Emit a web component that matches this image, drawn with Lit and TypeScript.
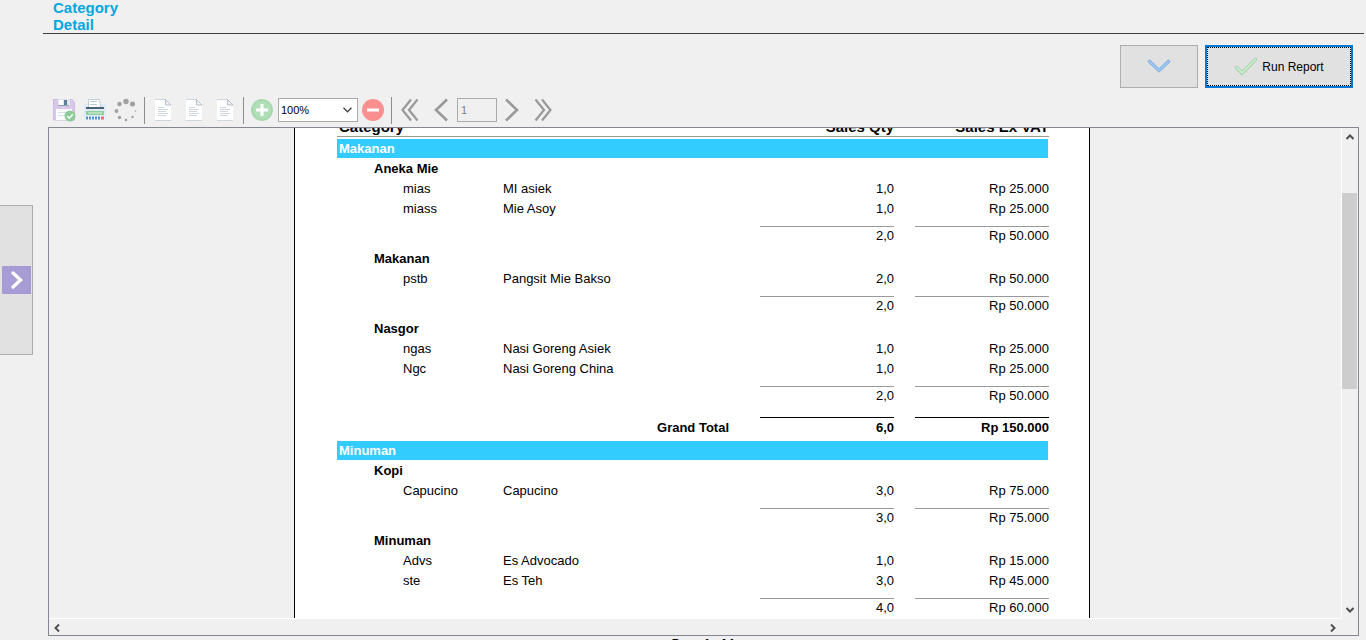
import { LitElement, html, css, svg } from "lit";
import { customElement, property } from "lit/decorators.js";

interface Item { code: string; name: string; qty: string; amount: string; }
interface Group { title: string; items: Item[]; qty: string; amount: string; }
interface Category { title: string; groups: Group[]; total?: { qty: string; amount: string }; }

const REPORT: Category[] = [
  {
    title: "Makanan",
    groups: [
      {
        title: "Aneka Mie",
        items: [
          { code: "mias", name: "MI asiek", qty: "1,0", amount: "Rp 25.000" },
          { code: "miass", name: "Mie Asoy", qty: "1,0", amount: "Rp 25.000" },
        ],
        qty: "2,0",
        amount: "Rp 50.000",
      },
      {
        title: "Makanan",
        items: [{ code: "pstb", name: "Pangsit Mie Bakso", qty: "2,0", amount: "Rp 50.000" }],
        qty: "2,0",
        amount: "Rp 50.000",
      },
      {
        title: "Nasgor",
        items: [
          { code: "ngas", name: "Nasi Goreng Asiek", qty: "1,0", amount: "Rp 25.000" },
          { code: "Ngc", name: "Nasi Goreng China", qty: "1,0", amount: "Rp 25.000" },
        ],
        qty: "2,0",
        amount: "Rp 50.000",
      },
    ],
    total: { qty: "6,0", amount: "Rp 150.000" },
  },
  {
    title: "Minuman",
    groups: [
      {
        title: "Kopi",
        items: [{ code: "Capucino", name: "Capucino", qty: "3,0", amount: "Rp 75.000" }],
        qty: "3,0",
        amount: "Rp 75.000",
      },
      {
        title: "Minuman",
        items: [
          { code: "Advs", name: "Es Advocado", qty: "1,0", amount: "Rp 15.000" },
          { code: "ste", name: "Es Teh", qty: "3,0", amount: "Rp 45.000" },
        ],
        qty: "4,0",
        amount: "Rp 60.000",
      },
    ],
  },
];

const ICONS: Record<string, unknown> = {
  save: svg`
    <path d="M1 1h19l3 3v18H1z" fill="#d9c8ea"/>
    <path d="M1.500 1.500h18l3 3V22h-21z" fill="none" stroke="#cdb9e2"/>
    <path d="M6 1h12v7H6z" fill="#dfe6ee"/>
    <path d="M7 2h4v5H7z" fill="#fff"/><path d="M12 2h3v5h-3z" fill="#5f7d96"/>
    <path d="M6 7.500h11" stroke="#8fa3b5"/>
    <path d="M4 11h16v11H4z" fill="#fafcff"/>
    <path d="M6 14.500h11M6 17.500h7" stroke="#d8e2ea"/>
    <circle cx="18" cy="18" r="5.500" fill="#8fcb98"/>
    <path d="M15.200 18.200l2 2 3.600-4" fill="none" stroke="#fff" stroke-width="1.600"/>`,
  print: svg`
    <path d="M1 6h22v16H1z" fill="#dcebf5"/>
    <path d="M3 9h18v2H3z" fill="#4d6276"/>
    <path d="M6 1h11v8H5z" fill="#fff"/>
    <path d="M5.500 9V1.500h11L17.500 9" fill="none" stroke="#c3cdd8"/>
    <path d="M7 3.500h7M7 6.500h7" stroke="#c0c8d0"/>
    <path d="M3 13h18v4H3z" fill="#8fcf9b"/><path d="M5 14h14v2H5z" fill="#b4e0bb"/>
    <path d="M2 18h20v4H2z" fill="#eef5fc"/>
    <path d="M3 20h15" stroke="#4f93da" stroke-width="3" stroke-dasharray="2 1"/>
    <path d="M18 20h3" stroke="#f26b63" stroke-width="3"/>`,
  spinner: svg`<g fill="#a0a0a0">
    <circle cx="12" cy="3.500" r="2.700"/><circle cx="18.500" cy="6" r="2.500"/>
    <circle cx="5.500" cy="6" r="2.200"/><circle cx="2.500" cy="13" r="1.900"/>
    <circle cx="5.500" cy="19.500" r="1.700"/><circle cx="12" cy="22" r="1.300"/>
    <circle cx="18.500" cy="19" r="1.200"/><circle cx="21.500" cy="13" r="0.800"/></g>`,
  page: svg`
    <path d="M4 1h11l5 5v17H4z" fill="#fff"/>
    <path d="M4 1.500h11M4 22.500h16" stroke="#ccd6df"/>
    <path d="M14.500 1v6H20L14.500 1.500" fill="#eef2f6" stroke="#b5c0cb"/>
    <path d="M7 9.500h6M7 11.500h10M7 13.500h8M7 15.500h10M7 17.500h8" stroke="#cfd6de"/>`,
  plus: svg`<circle cx="12" cy="12" r="11" fill="#b0deb6"/><circle cx="12" cy="12" r="10" fill="none" stroke="#a1d4a8"/>
    <path d="M12 6v12M6 12h12" stroke="#fff" stroke-width="3"/>`,
  minus: svg`<circle cx="12" cy="12" r="11" fill="#f98f8f"/><path d="M6 12h12" stroke="#fff" stroke-width="3"/>`,
  first: svg`<path d="M13 1.500L4.500 12 13 22.500M19.500 1.500L11 12l8.500 10.500" fill="none" stroke="#999" stroke-width="2.200"/>`,
  prev: svg`<path d="M18 1.500L7 12l11 10.500" fill="none" stroke="#999" stroke-width="2.600"/>`,
  next: svg`<path d="M6 1.500L17 12 6 22.500" fill="none" stroke="#999" stroke-width="2.600"/>`,
  last: svg`<path d="M4.500 1.500L13 12 4.500 22.500M11 1.500L19.500 12 11 22.500" fill="none" stroke="#999" stroke-width="2.200"/>`,
  down: svg`<path d="M1.500 5.500L12 15.500 22.500 5.500" fill="none" stroke="#7fa9dc" stroke-width="3.200"/>
    <path d="M2 6L12 15.500 22 6" fill="none" stroke="#9cc8f7" stroke-width="1.800"/>`,
  check: svg`<path d="M2.500 12.500l5.500 5.500L21.500 4.500" fill="none" stroke="#9ccba5" stroke-width="3.400" stroke-linecap="round"/>
    <path d="M2.500 12.500l5.500 5.500L21.500 4.500" fill="none" stroke="#c9efcd" stroke-width="1.900" stroke-linecap="round"/>`,
};

@customElement("glyph-icon")
export class GlyphIcon extends LitElement {
  @property() name = "";
  static styles = css`
    :host { display: block; width: 24px; height: 24px; flex: none; }
    .glyph { display: block; width: 24px; height: 24px; }
  `;
  render() {
    return html`<svg class="glyph" viewBox="0 0 24 24" aria-hidden="true">${ICONS[this.name]}</svg>`;
  }
}

@customElement("report-sheet")
export class ReportSheet extends LitElement {
  static styles = css`
    :host { display: block; }
    .table {
      width: 712px; table-layout: fixed; border-collapse: separate; border-spacing: 0;
      font: 13px/20px "Liberation Sans", Arial, sans-serif; color: #000;
    }
    .c-indent { width: 37px; }
    .c-group { width: 29px; }
    .c-code { width: 100px; }
    .c-qty, .c-amount { width: 134px; }
    .c-gap { width: 21px; }
    td, th { padding: 0; white-space: nowrap; text-align: left; vertical-align: top; }
    .num { text-align: right; }
    .head { font-size: 15px; line-height: 19px; height: 19px; border-bottom: 1px solid #999; }
    .head.first { padding-left: 2px; }
    .space { height: 2px; }
    .band {
      height: 19px; line-height: 19px; padding-left: 2px; color: #fff;
      background: #33ccff; background-clip: padding-box;
      border: solid transparent; border-width: 0 1px 1px 0;
    }
    .sum { line-height: 18px; padding: 7px 0 4px; }
    .sum .value { display: block; border-top: 1px solid #999; }
    .grand { font-weight: bold; line-height: 20px; padding: 8px 0 3px; }
    .grand .value { display: block; border-top: 1px solid #000; }
    .grand .label { display: block; padding: 1px 31px 0 0; }
    .table .num.head, .table .num { text-align: right; }
  `;

  private group(g: Group) {
    return html`
      <tr><td></td><th colspan="6" scope="rowgroup">${g.title}</th></tr>
      ${g.items.map((i) => html`
        <tr>
          <td></td><td></td><td>${i.code}</td><td>${i.name}</td>
          <td class="num">${i.qty}</td><td></td><td class="num">${i.amount}</td>
        </tr>`)}
      <tr>
        <td colspan="4"></td>
        <td class="num sum"><span class="value">${g.qty}</span></td><td></td>
        <td class="num sum"><span class="value">${g.amount}</span></td>
      </tr>`;
  }

  render() {
    return html`
      <table class="table">
        <colgroup>
          <col class="c-indent"><col class="c-group"><col class="c-code"><col>
          <col class="c-qty"><col class="c-gap"><col class="c-amount">
        </colgroup>
        <thead>
          <tr>
            <th class="head first" colspan="4" scope="col">Category</th>
            <th class="head num" scope="col">Sales Qty</th><td class="head"></td>
            <th class="head num" scope="col">Sales Ex VAT</th>
          </tr>
          <tr><td class="space" colspan="7"></td></tr>
        </thead>
        ${REPORT.map((c) => html`
          <tbody>
            <tr><th class="band" colspan="7" scope="rowgroup">${c.title}</th></tr>
            ${c.groups.map((g) => this.group(g))}
            ${c.total ? html`
              <tr>
                <th class="num grand" colspan="4" scope="row"><span class="label">Grand Total</span></th>
                <td class="num grand"><span class="value">${c.total.qty}</span></td><td></td>
                <td class="num grand"><span class="value">${c.total.amount}</span></td>
              </tr>` : ""}
          </tbody>`)}
      </table>`;
  }
}

@customElement("app-root")
export class AppRoot extends LitElement {
  static styles = css`
    :host {
      display: flex; height: 100vh; overflow: hidden; background: #f0f0f0; color: #000;
      font: 12px/14px "Liberation Sans", Arial, sans-serif;
    }
    * { box-sizing: border-box; }
    button { font: inherit; color: inherit; padding: 0; margin: 0; border: 0; background: none; }
    .rail { flex: none; width: 43px; display: flex; flex-direction: column; padding-top: 205px; }
    .opener {
      width: 33px; height: 150px; display: flex; align-items: center;
      background: #e1e1e1; border: 1px solid #adadad; border-left: 0; padding-left: 2px;
    }
    .tile { width: 29px; height: 28px; background: #a79cd3; display: block; }
    .main { flex: 1; min-width: 0; display: flex; flex-direction: column; }
    .header { height: 34px; padding-left: 10px; border-bottom: 1px solid #404040; margin-right: 2px; display: flex; align-items: flex-start; }
    .title { margin: -1px 0 0; width: 80px; font-size: 15px; line-height: 17px; color: #00a8e1; }
    .actions { display: flex; justify-content: flex-end; gap: 7px; padding: 11px 13px 0 0; }
    .action {
      height: 43px; width: 78px; display: flex; align-items: center; justify-content: center;
      background: #e1e1e1; border: 1px solid #adadad; gap: 4px;
    }
    .run { width: 148px; border: 2px solid #0078d7; outline: 1px dotted #000; outline-offset: -3px; }
    .toolbar { display: flex; align-items: center; height: 39px; padding: 5px 0 0 6px; }
    .tool { width: 31px; height: 24px; display: flex; padding-left: 3px; flex: none; }
    .sep { width: 1px; height: 27px; background: #8c8c8c; margin: 0 3px 0 2px; flex: none; }
    .zoom { display: grid; width: 80px; height: 24px; }
    .zoom > * { grid-area: 1 / 1; }
    .zoom-select {
      appearance: none; width: 80px; height: 24px; margin: 0; padding: 0 0 0 2px; border: 1px solid #aaa;
      border-radius: 0; background: #fff; color: #000; font: 11px/14px "Liberation Sans", Arial, sans-serif;
    }
    .zoom-arrow { width: 9px; height: 6px; justify-self: end; align-self: center; margin-right: 6px; pointer-events: none; }
    .page-input {
      width: 40px; height: 24px; margin: 0; padding: 0 0 0 3px; border: 1px solid #aaa; border-radius: 0;
      background: #f0f0f0; color: #808080; font: 11px/14px "Liberation Sans", Arial, sans-serif;
    }
    .viewer {
      flex: 1; min-height: 0; margin: 0 7px 0 5px; border: 1px solid #828790;
      display: grid; grid-template: minmax(0, 1fr) 17px / minmax(0, 1fr) 17px;
    }
    .viewport { overflow: hidden; display: flex; justify-content: center; align-items: flex-start; padding-right: 6px; }
    .sheet {
      flex: none; width: 796px; margin-top: -11px; padding: 0 40px 20px 42px; background: #fff;
      border: solid #000; border-width: 0 1px;
    }
    .vbar { border-left: 1px solid #fff; display: flex; flex-direction: column; justify-content: space-between; }
    .hbar { border-top: 1px solid #fff; display: flex; justify-content: space-between; }
    .arrow { width: 16px; height: 17px; display: flex; align-items: center; justify-content: center; flex: none; }
    .track { flex: 1; padding-top: 48px; }
    .thumb { width: 15px; height: 196px; background: #cdcdcd; }
    .mark { width: 8px; height: 8px; display: block; }
    .footer { height: 4px; padding-top: 1px; flex: none; text-align: center; font-weight: bold; margin-right: 2px; }
  `;

  private tool(icon: string, label: string) {
    return html`<button class="tool" aria-label=${label}><glyph-icon name=${icon}></glyph-icon></button>`;
  }

  private arrow(label: string, d: string) {
    return html`<button class="arrow" aria-label=${label}>
      <svg class="mark" viewBox="0 0 8 8"><path d=${d} fill="none" stroke="#505050" stroke-width="2"/></svg>
    </button>`;
  }

  render() {
    return html`
      <aside class="rail">
        <button class="opener" aria-label="Open panel">
          <svg class="tile" viewBox="0 0 29 28"><path d="M11 7l7.500 7L11 21" fill="none" stroke="#fff" stroke-width="3.400" stroke-linecap="round"/></svg>
        </button>
      </aside>
      <main class="main">
        <header class="header"><h1 class="title">Category Detail</h1></header>
        <div class="actions">
          <button class="action" aria-label="Show parameters"><glyph-icon name="down"></glyph-icon></button>
          <button class="action run"><glyph-icon name="check"></glyph-icon>Run Report</button>
        </div>
        <div class="toolbar" role="toolbar">
          ${this.tool("save", "Save")}${this.tool("print", "Print")}${this.tool("spinner", "Reload")}
          <span class="sep"></span>
          ${this.tool("page", "Actual size")}${this.tool("page", "Fit page")}${this.tool("page", "Fit width")}
          <span class="sep"></span>
          ${this.tool("plus", "Zoom in")}
          <div class="zoom">
            <select class="zoom-select" aria-label="Zoom"><option>100%</option></select>
            <svg class="zoom-arrow" viewBox="0 0 9 6"><path d="M0.500 0.800l4 4 4-4" fill="none" stroke="#444" stroke-width="1.300"/></svg>
          </div>
          ${this.tool("minus", "Zoom out")}
          <span class="sep"></span>
          ${this.tool("first", "First page")}${this.tool("prev", "Previous page")}
          <input class="page-input" aria-label="Page" value="1" disabled>
          ${this.tool("next", "Next page")}${this.tool("last", "Last page")}
        </div>
        <section class="viewer">
          <div class="viewport"><div class="sheet"><report-sheet></report-sheet></div></div>
          <div class="vbar">
            ${this.arrow("Scroll up", "M0.500 6L4 2.500 7.500 6")}
            <div class="track"><div class="thumb"></div></div>
            ${this.arrow("Scroll down", "M0.500 2L4 5.500 7.500 2")}
          </div>
          <div class="hbar">
            ${this.arrow("Scroll left", "M6 0.500L2.500 4 6 7.500")}
            ${this.arrow("Scroll right", "M2 0.500L5.500 4 2 7.500")}
          </div>
        </section>
        <footer class="footer">Page 1 of 1</footer>
      </main>`;
  }
}
